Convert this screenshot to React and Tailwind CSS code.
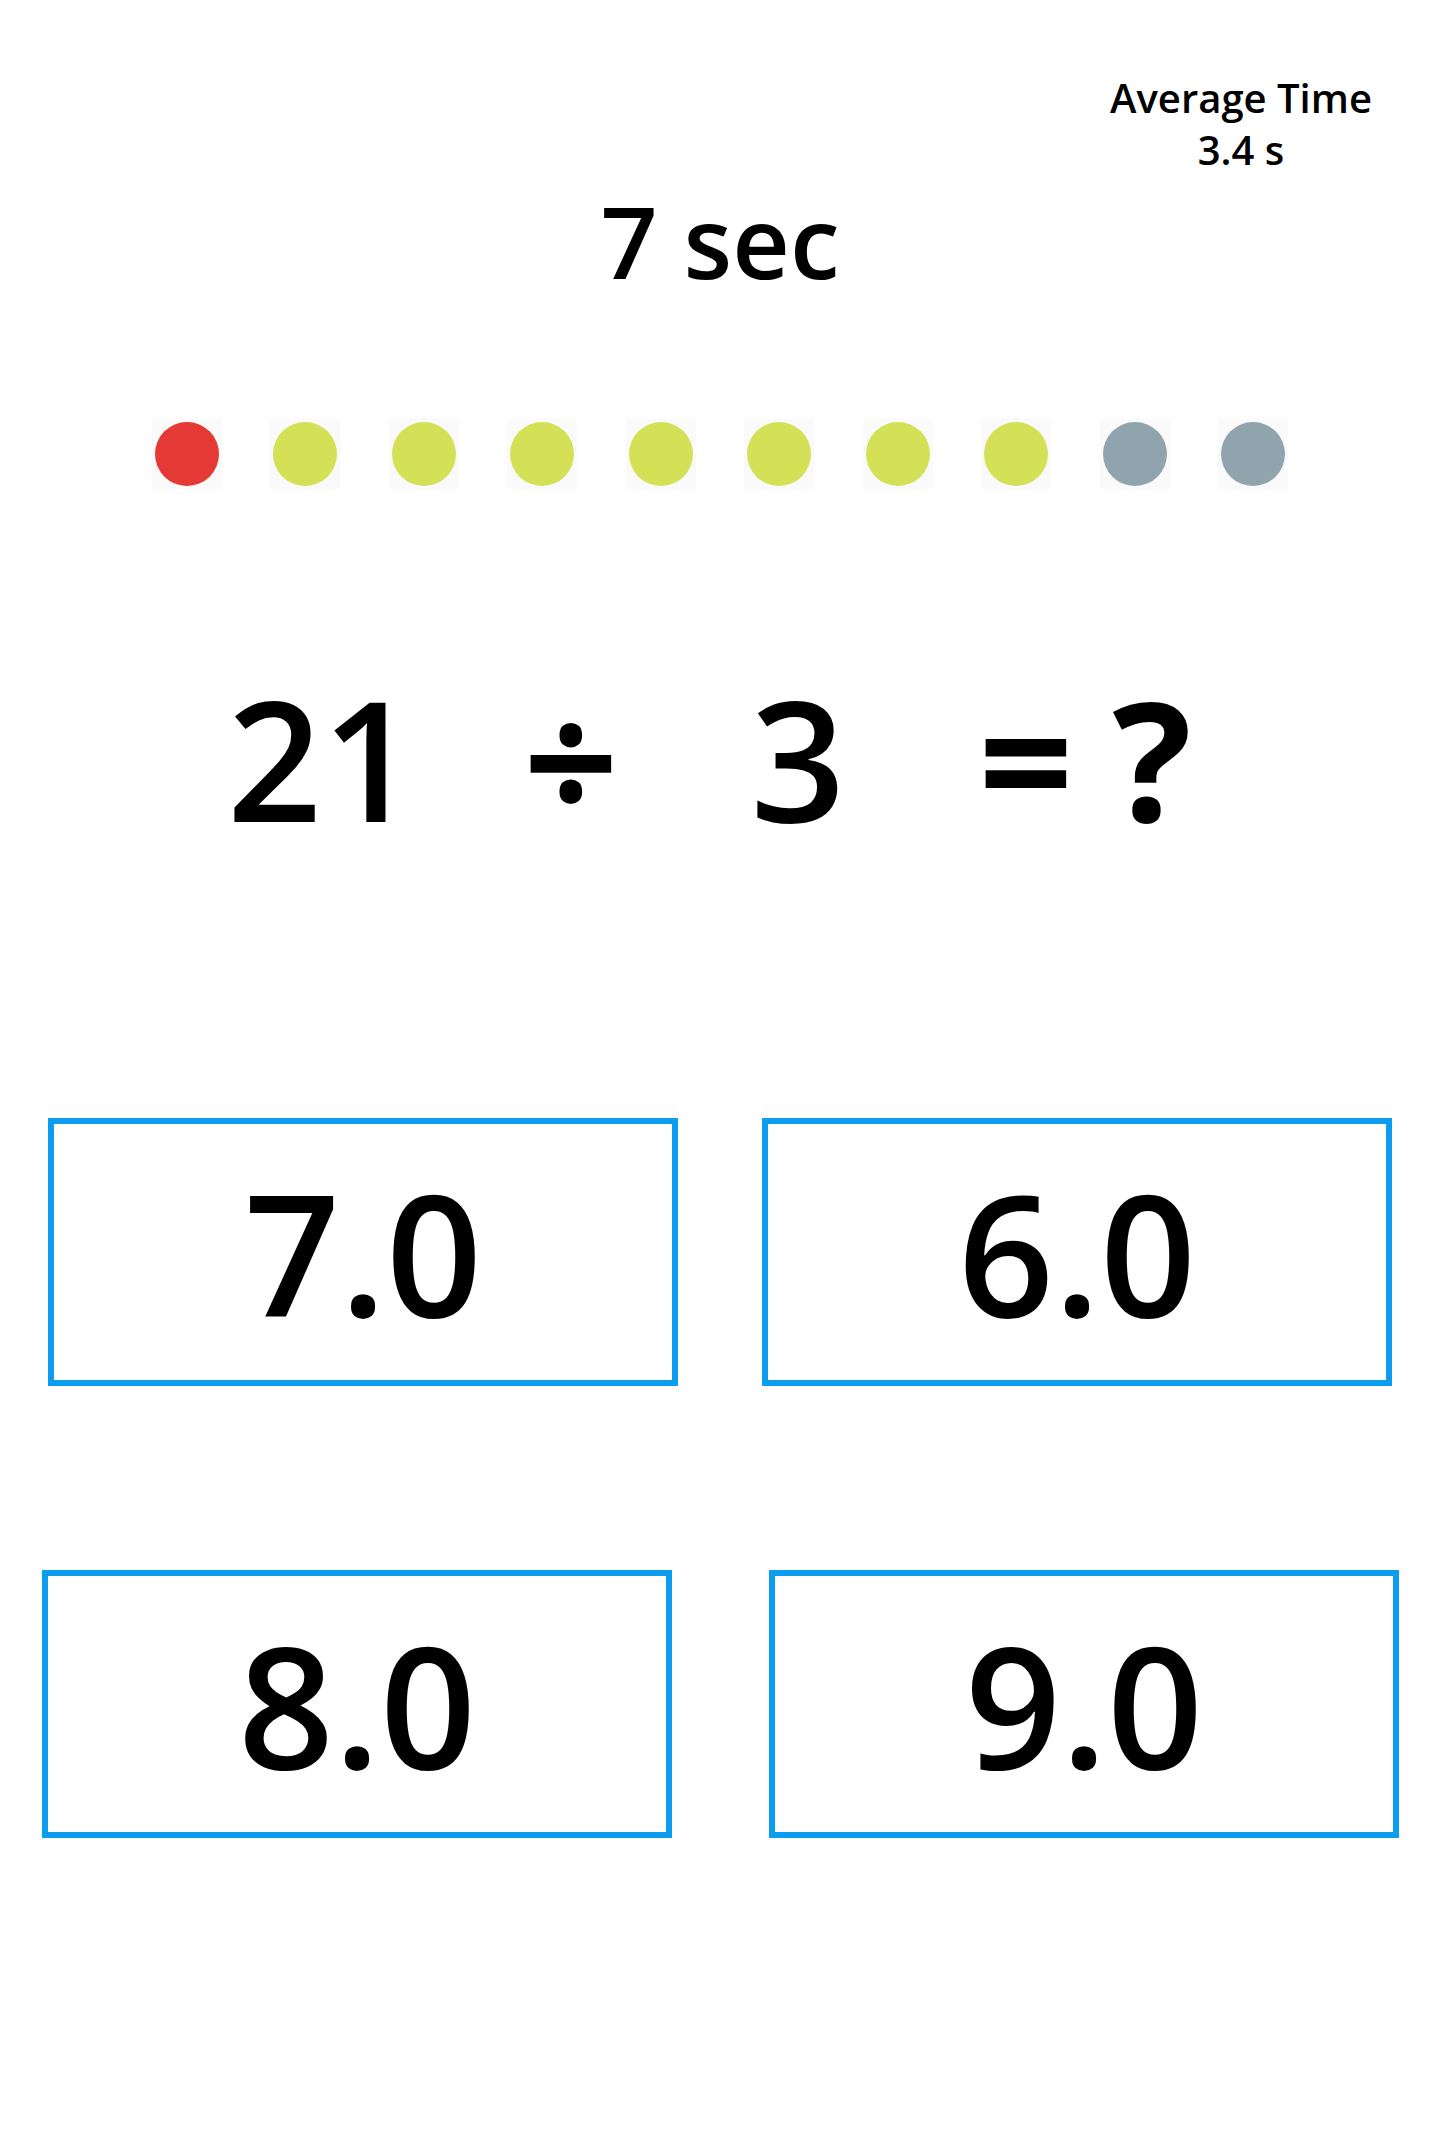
const DOTS = ['red', 'lime', 'lime', 'lime', 'lime', 'lime', 'lime', 'lime', 'gray', 'gray']

const DOT_COLORS = {
  red: 'bg-[#e53935]',
  lime: 'bg-[#d4e157]',
  gray: 'bg-[#90a4ae]',
}

function AnswerBox({ value }) {
  return (
    <button className="w-[630px] h-[268px] border-[6px] border-[#0c9df0] bg-white flex items-center justify-center">
      <span className="text-[168px] leading-none font-semibold text-black">{value}</span>
    </button>
  )
}

export default function App() {
  return (
    <div
      className="w-[1440px] h-[2142px] bg-white text-black"
      style={{ fontFamily: '"Open Sans", "Noto Sans", sans-serif' }}
    >
      {/* average time */}
      <div className="h-[190px] pt-[72px] flex justify-end pr-[49px]">
        <div className="w-[300px] text-center text-[40px] leading-[52px] font-semibold">
          <div>Average Time</div>
          <div>3.4 s</div>
        </div>
      </div>

      {/* countdown */}
      <div className="h-[100px] flex items-center justify-center">
        <span className="text-[100px] leading-none font-semibold">7 sec</span>
      </div>

      {/* progress dots */}
      <div className="mt-[129px] h-[70px] flex justify-center gap-[48.5px]">
        {DOTS.map((d, i) => (
          <div key={i} className="w-[70px] h-[70px] bg-[#fafafa] flex items-center justify-center">
            <div className={`w-[64px] h-[64px] rounded-full ${DOT_COLORS[d]}`} />
          </div>
        ))}
      </div>

      {/* question */}
      <div className="mt-[184px] h-[170px] flex items-center text-[166px] leading-none font-semibold">
        <span className="ml-[222px] w-[200px] text-center">21</span>
        <span className="ml-[89px] w-[120px] text-center font-bold">÷</span>
        <span className="ml-[107px] w-[120px] text-center">3</span>
        <span className="ml-[108px] w-[120px] text-center font-bold">=</span>
        <span className="ml-[6px] w-[120px] text-center font-bold">?</span>
      </div>

      {/* answers */}
      <div className="mt-[275px] flex pl-[48px] gap-[84px]">
        <AnswerBox value="7.0" />
        <AnswerBox value="6.0" />
      </div>
      <div className="mt-[184px] flex pl-[42px] gap-[97px]">
        <AnswerBox value="8.0" />
        <AnswerBox value="9.0" />
      </div>
    </div>
  )
}
